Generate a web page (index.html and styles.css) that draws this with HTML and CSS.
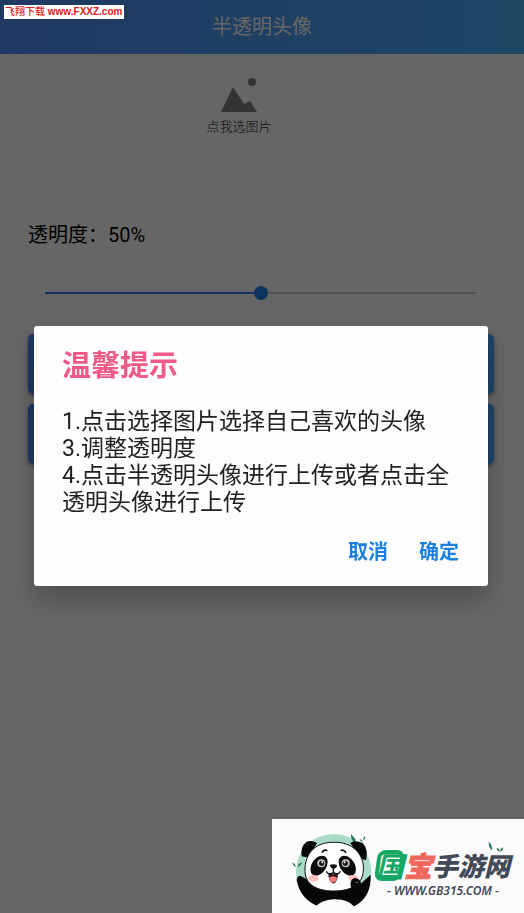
FILE: index.html
```html
<!DOCTYPE html>
<html lang="zh-CN">
<head>
  <meta charset="UTF-8" />
  <meta name="viewport" content="width=device-width, initial-scale=1.0"/>
  <title>半透明头像</title>
  <link rel="stylesheet" href="styles.css">
</head>
<body>
  <header class="app-bar">
    <h1 class="app-title">半透明头像</h1>
  </header>

  <main class="content">
    <button class="picker" type="button">
      <svg class="picker-icon" viewBox="0 0 38 36" aria-hidden="true">
        <circle cx="32" cy="5" r="4"/>
        <path d="M1 35 L13 10 L24 27 L30 24 L37 35 Z"/>
      </svg>
      <span>点我选图片</span>
    </button>

    <label class="opacity-label" for="opacity">透明度：50%</label>
    <input class="opacity-slider" type="range" id="opacity" min="0" max="100" value="50">

    <div class="actions">
      <button class="upload-btn" type="button" aria-label="半透明头像"></button>
      <button class="upload-btn" type="button" aria-label="全透明头像"></button>
    </div>
  </main>

  <!-- 温馨提示弹窗 -->
  <div class="overlay">
    <div class="dialog" role="dialog" aria-labelledby="dialog-title">
      <h2 class="dialog-title" id="dialog-title">温馨提示</h2>
      <p class="dialog-text">1.点击选择图片选择自己喜欢的头像<br>3.调整透明度<br>4.点击半透明头像进行上传或者点击全透明头像进行上传</p>
      <div class="dialog-buttons">
        <button class="dialog-btn" type="button">取消</button>
        <button class="dialog-btn" type="button">确定</button>
      </div>
    </div>
  </div>

  <div class="site-tag">飞翔下载 <b>www.FXXZ.com</b></div>

  <div class="brand">
    <svg class="panda" viewBox="0 0 255 249" aria-hidden="true">
      <circle cx="128" cy="125" r="113" fill="#a9dbc6"/>
      <path d="M79 228 L189 229 L215 240 L128 249 L50 241 Z" fill="#fbfbfb"/>
      <path d="M180 12 Q178 31 193 39 L193 27 Z M4 97 Q6 108 15 111 Q13 101 4 97 M20 111 Q21 101 33 97 Q30 108 20 111 M206 28 Q213 29 216 35 Q207 35 206 28 M217 31 Q216 22 222 18 Q225 27 217 31" fill="#28775b"/>
      <path d="M32 79 Q27 50 47 35 Q63 29 78 39 L54 83 Z M178 39 Q190 28 215 39 Q233 59 225 91 L207 85 Z" fill="#070809"/>
      <path d="M17 151 Q18 137 29 138 L48 148 Q59 175 125 182 Q168 182 187 171 Q175 145 194 145 Q207 146 209 161 L239 134 Q242 202 189 229 L79 228 Q27 206 17 151 Z" fill="#070809"/>
      <path d="M76 229 Q90 211 128 208 Q171 207 188 229 L188 249 L76 249 Z" fill="#fbfbfb"/>
      <path d="M42 125 C40 65 79 35 130 37 C183 35 220 72 217 119 C216 161 185 183 127 183 C76 183 43 162 42 125 Z" fill="#fff" stroke="#0b0b0b" stroke-width="3"/>
      <ellipse cx="84" cy="107" rx="22" ry="33" transform="rotate(34 84 107)" fill="#0a0a0b"/>
      <ellipse cx="169" cy="107" rx="22" ry="33" transform="rotate(-34 169 107)" fill="#0a0a0b"/>
      <circle cx="91" cy="100" r="12" fill="#d7cbc2"/>
      <circle cx="164" cy="100" r="12" fill="#d7cbc2"/>
      <circle cx="92" cy="100" r="8" fill="#171719"/>
      <circle cx="163" cy="100" r="8" fill="#171719"/>
      <circle cx="94" cy="97" r="3" fill="#fff"/>
      <circle cx="161" cy="97" r="3" fill="#fff"/>
      <ellipse cx="68" cy="145" rx="15" ry="10" fill="#ffc0bb"/>
      <ellipse cx="187" cy="145" rx="14" ry="10" fill="#ffc0bb"/>
      <path d="M94 66 Q99 58 107 61 M151 61 Q159 59 164 67" fill="none" stroke="#111" stroke-width="5" stroke-linecap="round"/>
      <path d="M116 106 Q127 100 139 106 Q136 116 127 117 Q119 115 116 106" fill="#111"/>
      <path d="M112 130 Q127 135 141 130 Q141 158 127 161 Q112 157 112 130 Z" fill="#321819"/>
      <path d="M114 143 Q125 134 138 143 Q137 157 127 158 Q117 156 114 143 Z" fill="#f47e7b"/>
      <path d="M107 125 Q112 136 127 128 Q142 136 147 125 M127 116 V129" fill="none" stroke="#111" stroke-width="4" stroke-linecap="round"/>
      <path d="M180 171 C174 153 187 139 200 146 Q212 151 209 168 L220 184 L195 194 Z" fill="#070809"/>
      <path d="M194 157 Q199 154 202 160" fill="none" stroke="#a76d70" stroke-width="3"/>
    </svg>
    <div class="brand-text">
      <svg class="leaves" viewBox="0 0 48 34" aria-hidden="true">
        <path d="M2 1 Q14 10 12 27 Q1 17 2 1 M26 19 Q35 22 35 31 Q26 29 26 19 M36 31 Q36 22 45 18 Q46 28 36 31" fill="#28775b"/>
      </svg>
      <div class="brand-name"><span class="brand-green">国</span><span class="brand-red">宝</span><span class="brand-dark">手游网</span></div>
      <div class="brand-url">- WWW.GB315.COM -</div>
    </div>
  </div>
</body>
</html>
```
FILE: styles.css
```css
* {
  box-sizing: border-box;
}

body {
  margin: 0;
  min-height: 100vh;
  background-color: #fff;
  color: #000;
  font-family: Roboto, "Noto Sans CJK SC", sans-serif;
}

button {
  font-family: inherit;
  border: none;
  cursor: pointer;
}

.app-bar {
  display: flex;
  align-items: center;
  justify-content: center;
  height: 54px;
  background: linear-gradient(to right, #5290f8, #4baff8);
}

.app-title {
  margin: 0;
  font-size: 20px;
  font-weight: 400;
  line-height: 24px;
  color: #fff;
}

.content {
  display: flex;
  flex-direction: column;
  padding: 20px 30px 20px 28px;
}

.picker {
  display: flex;
  flex-direction: column;
  align-items: center;
  align-self: center;
  gap: 4px;
  height: 147px;
  margin-right: 44px;
  padding: 3px 0;
  background-color: transparent;
  color: #222;
  font-size: 13px;
  font-weight: 300;
  line-height: 20px;
}

.picker-icon {
  width: 38px;
  height: 36px;
  fill: #808080;
}

.opacity-label {
  font-size: 20px;
  line-height: 28px;
}

/* Slider */
.opacity-slider {
  appearance: none;
  height: 14px;
  margin: 37px 18px 34px 17px;
  background: linear-gradient(#1c80e4, #1c80e4) left center / 50% 2px no-repeat,
    linear-gradient(#c8c8c8, #c8c8c8) center / 100% 2px no-repeat;
}

.opacity-slider::-webkit-slider-thumb {
  appearance: none;
  width: 14px;
  height: 14px;
  border-radius: 50%;
  background-color: #1c80e4;
}

.actions {
  display: flex;
  flex-direction: column;
  gap: 10px;
}

.upload-btn {
  height: 60px;
  border-radius: 5px;
  background: linear-gradient(to right, #508cfa, #46aaff);
  box-shadow: 0 2px 4px rgba(0,0,0,0.4);
}

/* Dialog */
.overlay {
  position: fixed;
  inset: 0;
  display: flex;
  align-items: center;
  padding: 0 36px 2px 34px;
  background-color: rgba(0,0,0,0.6);
}

.dialog {
  width: 100%;
  padding: 20px 29px 20px 28px;
  border-radius: 3px;
  background-color: #fdfdfd;
  box-shadow: 0 14px 28px rgba(0,0,0,0.24);
}

.dialog-title {
  margin: 0 0 22px;
  font-size: 29px;
  font-weight: 700;
  line-height: 40px;
  color: #ef5b86;
}

.dialog-text {
  margin: 0 0 22px;
  font-size: 23px;
  line-height: 27px;
  color: #212121;
}

.dialog-buttons {
  display: flex;
  justify-content: flex-end;
  gap: 31px;
}

.dialog-btn {
  padding: 0;
  background-color: transparent;
  color: #1e7fe0;
  font-size: 20px;
  font-weight: 700;
  line-height: 28px;
}

.site-tag {
  position: absolute;
  top: 5px;
  left: 4px;
  padding: 0 2px 0 1px;
  background-color: #fff;
  color: #d8201c;
  font-family: "Liberation Sans", "Noto Sans CJK SC", sans-serif;
  font-size: 10px;
  font-weight: 500;
  line-height: 14px;
  white-space: nowrap;
}

/* Brand corner */
.brand {
  position: fixed;
  right: 0;
  bottom: 0;
  display: flex;
  padding: 11px 14px 0 19px;
  background-color: #fbfbfb;
}

.panda {
  width: 85px;
  height: 83px;
}

.brand-text {
  position: relative;
  padding-top: 18px;
  text-align: center;
  color: #424957;
}

.leaves {
  position: absolute;
  top: 11px;
  right: 6px;
  width: 16px;
  height: 12px;
}

.brand-name {
  display: flex;
  align-items: center;
  height: 34px;
  font-family: "Noto Sans CJK SC", sans-serif;
  font-style: italic;
  font-weight: 900;
  line-height: 34px;
  white-space: nowrap;
}

.brand-green,
.brand-red {
  font-size: 28px;
}

.brand-green {
  position: relative;
  color: #16a765;
  font-weight: 700;
}

/* rounded frame round the first character */
.brand-green::before {
  content: "";
  position: absolute;
  inset: 2px 1px 1px 0;
  border: 4px solid #16a765;
  border-radius: 8px;
  transform: skewX(-8deg);
}

.brand-red {
  color: #f0675e;
  -webkit-text-stroke: 1px;
}

.brand-dark {
  font-size: 26px;
}

.brand-url {
  font-family: "Noto Sans", sans-serif;
  font-size: 12px;
  font-style: italic;
  font-weight: 600;
  line-height: 18px;
}
```
